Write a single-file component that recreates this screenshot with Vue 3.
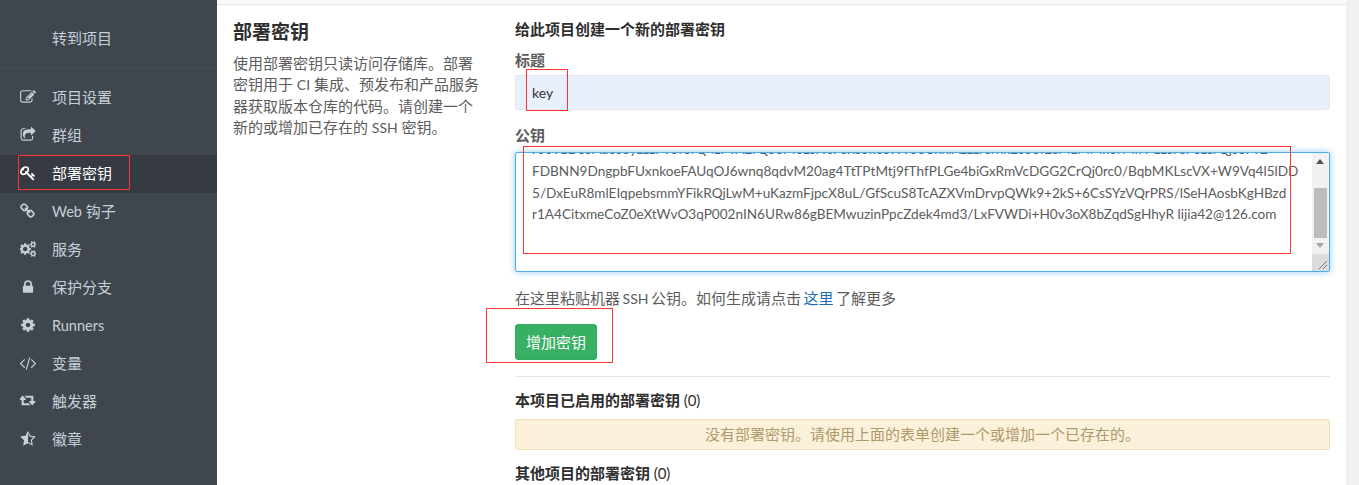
<script setup>
const P = {
  edit: 'M888 1184l116-116-152-152-116 116v56h96v96h56zm440-720q-16-16-33 1l-350 350q-17 17-1 33t33-1l350-350q17-17 1-33zm80 594v190q0 119-84.5 203.5t-203.5 84.5h-832q-119 0-203.5-84.5t-84.5-203.5v-832q0-119 84.5-203.5t203.5-84.5h832q63 0 117 25 15 7 18 23 3 17-9 29l-49 49q-14 14-32 8-23-6-45-6h-832q-66 0-113 47t-47 113v832q0 66 47 113t113 47h832q66 0 113-47t47-113v-126q0-13 9-22l64-64q15-15 35-7t20 29zm-96-738l288 288-672 672h-288v-288zm444 132l-92 92-288-288 92-92q28-28 68-28t68 28l152 152q28 28 28 68t-28 68z',
  share: 'M1472 989v259q0 119-84.5 203.5t-203.5 84.5h-832q-119 0-203.5-84.5t-84.5-203.5v-832q0-119 84.5-203.5t203.5-84.5h255q13 0 22.5 9.5t9.5 22.5q0 27-26 32-77 26-133 60-10 4-16 4h-112q-66 0-113 47t-47 113v832q0 66 47 113t113 47h832q66 0 113-47t47-113v-214q0-19 18-29 28-13 54-37 16-16 35-8 21 9 21 29zm237-496l-384 384q-18 19-45 19-12 0-25-5-39-17-39-59v-192h-160q-323 0-438 131-119 137-74 473 3 23-20 34-8 2-12 2-16 0-26-13-10-14-21-31t-39.5-68.5-49.5-99.5-38.5-114-17.5-122q0-49 3.5-91t14-90 28-88 47-81.5 68.5-74 94.5-61.5 124.5-48.5 159.5-30.5 196.5-11h160v-192q0-42 39-59 13-5 25-5 26 0 45 19l384 384q19 19 19 45t-19 45z',
  key: 'M832 512q0-80-56-136t-136-56-136 56-56 136q0 42 19 83-41-19-83-19-80 0-136 56t-56 136 56 136 136 56 136-56 56-136q0-42-19-83 41 19 83 19 80 0 136-56t56-136zm851 704q0 17-49 66t-66 49q-9 0-28.5-16t-36.5-33-38.5-40-24.5-26l-96 96 220 220q28 28 28 68 0 42-39 81t-81 39q-40 0-68-28l-671-671q-176 131-365 131-163 0-265.5-102.5t-102.5-265.5q0-160 95-313t248-248 313-95q163 0 265.5 102.5t102.5 265.5q0 189-131 365l355 355 96-96q-3-3-26-24.5t-40-38.5-33-36.5-16-28.5q0-17 49-66t66-49q13 0 23 10 6 6 46 44.5t82 79.5 86.5 86 73 78 28.5 41z',
  link: 'M1456 1216q0-40-28-68l-208-208q-28-28-68-28-42 0-72 32 3 3 19 18.5t21.5 21.5 15 19 13 25.5 3.5 27.5q0 40-28 68t-68 28q-15 0-27.5-3.5t-25.5-13-19-15-21.5-21.5-18.5-19q-33 31-33 73 0 40 28 68l206 207q27 27 68 27 40 0 68-26l147-146q28-28 28-67zm-703-705q0-40-28-68l-206-207q-28-28-68-28-39 0-68 27l-147 146q-28 28-28 67 0 40 28 68l208 208q27 27 68 27 42 0 72-31-3-3-19-18.5t-21.5-21.5-15-19-13-25.5-3.5-27.5q0-40 28-68t68-28q15 0 27.5 3.5t25.5 13 19 15 21.5 21.5 18.5 19q33-31 33-73zm895 705q0 120-85 203l-147 146q-83 83-203 83-121 0-204-85l-206-207q-83-83-83-203 0-123 88-209l-88-88q-86 88-208 88-120 0-204-84l-208-208q-84-84-84-204t85-203l147-146q83-83 203-83 121 0 204 85l206 207q83 83 83 203 0 123-88 209l88 88q86-88 208-88 120 0 204 84l208 208q84 84 84 204z',
  cogs: 'M832 896q0-106-75-181t-181-75-181 75-75 181 75 181 181 75 181-75 75-181zm768 512q0-52-38-90t-90-38-90 38-38 90q0 53 37.5 90.5t90.5 37.5 90.5-37.5 37.5-90.5zm0-1024q0-52-38-90t-90-38-90 38-38 90q0 53 37.5 90.5t90.5 37.5 90.5-37.5 37.5-90.5zm-384 421v185q0 10-7 19.5t-16 10.5l-155 24q-11 35-32 76 34 48 90 115 7 11 7 20 0 12-7 19-23 30-82.5 89.5t-78.5 59.5q-11 0-21-7l-115-90q-37 19-77 31-11 108-23 155-7 24-30 24h-186q-11 0-20-7.5t-10-17.5l-23-153q-34-10-75-31l-118 89q-7 7-20 7-11 0-21-8-144-133-144-160 0-9 7-19 10-14 41-53t47-61q-23-44-35-82l-152-24q-10-1-17-9.5t-7-19.5v-185q0-10 7-19.5t16-10.5l155-24q11-35 32-76-34-48-90-115-7-11-7-20 0-12 7-20 22-30 82-89t79-59q11 0 21 7l115 90q34-18 77-32 11-108 23-154 7-24 30-24h186q11 0 20 7.5t10 17.5l23 153q34 10 75 31l118-89q8-7 20-7 11 0 21 8 144 133 144 160 0 8-7 19-12 16-42 54t-45 60q23 48 34 82l152 23q10 2 17 10.5t7 19.5zm640 533v140q0 16-149 31-12 27-30 52 51 113 51 138 0 4-4 7-122 71-124 71-8 0-46-47t-52-68q-20 2-30 2t-30-2q-14 21-52 68t-46 47q-2 0-124-71-4-3-4-7 0-25 51-138-18-25-30-52-149-15-149-31v-140q0-16 149-31 13-29 30-52-51-113-51-138 0-4 4-7 4-2 35-20t59-34 30-16q8 0 46 46.5t52 67.5q20-2 30-2t30 2q51-71 92-112l6-2q4 0 124 70 4 3 4 7 0 25-51 138 17 23 30 52 149 15 149 31zm0-1024v140q0 16-149 31-12 27-30 52 51 113 51 138 0 4-4 7-122 71-124 71-8 0-46-47t-52-68q-20 2-30 2t-30-2q-14 21-52 68t-46 47q-2 0-124-71-4-3-4-7 0-25 51-138-18-25-30-52-149-15-149-31v-140q0-16 149-31 13-29 30-52-51-113-51-138 0-4 4-7 4-2 35-20t59-34 30-16q8 0 46 46.5t52 67.5q20-2 30-2t30 2q51-71 92-112l6-2q4 0 124 70 4 3 4 7 0 25-51 138 17 23 30 52 149 15 149 31z',
  lock: 'M640 768h512v-192q0-106-75-181t-181-75-181 75-75 181v192zm832 96v576q0 40-28 68t-68 28h-960q-40 0-68-28t-28-68v-576q0-40 28-68t68-28h32v-192q0-184 132-316t316-132 316 132 132 316v192h32q40 0 68 28t28 68z',
  cog: 'M1152 896q0-106-75-181t-181-75-181 75-75 181 75 181 181 75 181-75 75-181zm512-109v222q0 12-8 23t-20 13l-185 28q-19 54-39 91 35 50 107 138 10 12 10 25t-9 23q-27 37-99 108t-94 71q-12 0-26-9l-138-108q-44 23-91 38-16 136-29 186-7 28-36 28h-222q-14 0-24.5-8.5t-11.5-21.5l-28-184q-49-16-90-37l-141 107q-10 9-25 9-14 0-25-11-126-114-165-168-7-10-7-23 0-12 8-23 15-21 51-66.5t54-70.5q-27-50-41-99l-183-27q-13-2-21-12.5t-8-23.5v-222q0-12 8-23t19-13l186-28q14-46 39-92-40-57-107-138-10-12-10-24 0-10 9-23 26-36 98.5-107.5t94.5-71.5q13 0 26 10l138 107q44-23 91-38 16-136 29-186 7-28 36-28h222q14 0 24.5 8.5t11.5 21.5l28 184q49 16 90 37l142-107q9-9 24-9 13 0 25 10 129 119 165 170 7 8 7 22 0 12-8 23-15 21-51 66.5t-54 70.5q26 50 41 98l183 28q13 2 21 12.5t8 23.5z',
  code: 'M553 1399l-50 50q-10 10-23 10t-23-10l-466-466q-10-10-10-23t10-23l466-466q10-10 23-10t23 10l50 50q10 10 10 23t-10 23l-393 393 393 393q10 10 10 23t-10 23zm591-1067l-373 1291q-4 13-15.5 19.5t-23.5 2.5l-62-17q-13-4-19.5-15.5t-2.5-24.5l373-1291q4-13 15.5-19.5t23.5-2.5l62 17q13 4 19.5 15.5t2.5 24.5zm657 651l-466 466q-10 10-23 10t-23-10l-50-50q-10-10-10-23t10-23l393-393-393-393q-10-10-10-23t10-23l50-50q10-10 23-10t23 10l466 466q10 10 10 23t-10 23z',
  retweet: 'M1216 1376q0 13-9.5 22.5t-22.5 9.5h-960q-8 0-13.5-2t-9-7-5.5-8-3-11.5-1-11.5v-600h-192q-26 0-45-19t-19-45q0-24 15-41l320-384q19-22 49-22t49 22l320 384q15 17 15 41 0 26-19 45t-45 19h-192v384h576q16 0 25 11l160 192q7 10 7 21zm640-416q0 24-15 41l-320 384q-20 23-49 23t-49-23l-320-384q-15-17-15-41 0-26 19-45t45-19h192v-384h-576q-16 0-25-12l-160-192q-7-9-7-20 0-13 9.5-22.5t22.5-9.5h960q8 0 13.5 2t9 7 5.5 8 3 11.5 1 11.5v600h192q26 0 45 19t19 45z',
  star: 'M1250 957l257-250-356-52-66-10-30-60-159-322v963l59 31 318 168-60-355-12-66zm452-262l-363 354 86 500q5 33-6 51.5t-34 18.5q-17 0-40-12l-449-236-449 236q-23 12-40 12-23 0-34-18.5t-6-51.5l86-500-364-354q-32-32-23-59.5t54-34.5l502-73 225-455q20-41 49-41 28 0 49 41l225 455 502 73q45 7 54 34.5t-24 59.5z',
}
const items = [
  { icon: 'edit', text: '项目设置' },
  { icon: 'share', text: '群组' },
  { icon: 'key', text: '部署密钥', active: true },
  { icon: 'link', latin: 'Web', text: ' 钩子' },
  { icon: 'cogs', text: '服务' },
  { icon: 'lock', text: '保护分支' },
  { icon: 'cog', latin: 'Runners', text: '' },
  { icon: 'code', text: '变量' },
  { icon: 'retweet', text: '触发器' },
  { icon: 'star', text: '徽章' },
]
const keyLines = [
  'r00v1Dc3Aa0s8yzzzPv0f8rQ4zPvA2rQSoM0zsrvsFcRs3k0sWv3oCnxlAzzz/srhk2s03f2sr4zMMk3rMf/P1zsFsF3zsrQjsoFv2',
  'FDBNN9DngpbFUxnkoeFAUqOJ6wnq8qdvM20ag4TtTPtMtj9fThfPLGe4biGxRmVcDGG2CrQj0rc0/BqbMKLscVX+W9Vq4l5lDD',
  '5/DxEuR8mlEIqpebsmmYFikRQjLwM+uKazmFjpcX8uL/GfScuS8TcAZXVmDrvpQWk9+2kS+6CsSYzVQrPRS/lSeHAosbKgHBzd',
  'r1A4CitxmeCoZ0eXtWvO3qP002nIN6URw86gBEMwuzinPpcZdek4md3/LxFVWDi+H0v3oX8bZqdSgHhyR lijia42@126.com',
]
</script>

<template>
  <div class="page">
    <aside class="sidebar">
      <div class="back">转到项目</div>
      <nav class="nav">
        <div v-for="it in items" :key="it.icon" class="item" :class="{ active: it.active }">
          <svg class="ico" :viewBox="it.icon === 'retweet' ? '0 0 1920 1792' : '0 0 1792 1792'"><path :d="P[it.icon]" /></svg>
          <span><span v-if="it.latin" class="navlat">{{ it.latin }}</span>{{ it.text }}</span>
        </div>
      </nav>
    </aside>

    <main class="main">
      <div class="topstrip"></div>
      <div class="content">
        <section class="intro">
          <h4>部署密钥</h4>
          <p>使用部署密钥只读访问存储库。部署密钥用于 <span class="lat">CI</span> 集成、预发布和产品服务器获取版本仓库的代码。请创建一个新的或增加已存在的 <span class="lat">SSH</span> 密钥。</p>
        </section>
        <section class="form">
          <h5>给此项目创建一个新的部署密钥</h5>
          <label class="lab l1">标题</label>
          <div class="input lat">key</div>
          <label class="lab l2">公钥</label>
          <div class="textarea">
            <div class="lines">
              <div v-for="l in keyLines" :key="l">{{ l }}</div>
            </div>
            <div class="sb">
              <span class="up"></span>
              <span class="thumb"></span>
              <span class="down"></span>
            </div>
            <div class="grip">
              <svg width="17" height="17" viewBox="0 0 17 17"><path d="M15 7L7 15M15 11L11 15" stroke="#777" stroke-width="1" fill="none" /></svg>
            </div>
          </div>
          <p class="help">在这里粘贴机器 <span class="lat">SSH</span> 公钥。如何生成请点击 <a>这里</a> 了解更多</p>
          <button class="btn">增加密钥</button>
          <hr />
          <h5 class="sub">本项目已启用的部署密钥 <span class="cnt">(0)</span></h5>
          <div class="alert">没有部署密钥。请使用上面的表单创建一个或增加一个已存在的。</div>
          <h5 class="sub s2">其他项目的部署密钥 <span class="cnt">(0)</span></h5>
        </section>
      </div>
    </main>
    <div class="gutter"></div>

    <i class="mark m1"></i>
    <i class="mark m2"></i>
    <i class="mark m3"></i>
    <i class="mark m4"></i>
  </div>
</template>

<style>
html, body { margin: 0; overflow: hidden; background: #fff; }
</style>

<style scoped>
.page {
  position: relative;
  display: flex;
  width: 1359px;
  height: 485px;
  overflow: hidden;
  font-family: "Lato", "Noto Sans CJK SC", sans-serif;
  font-size: 15px;
  color: #5c5c5c;
}
.lat { font-size: 14px; }
.navlat { font-size: 14.5px; }
.sidebar { width: 217px; flex: none; background: #3f464d; color: #c6d0da; }
.back { height: 69px; box-sizing: border-box; padding: 0 0 0 52px; line-height: 76px; border-bottom: 1px solid #474d55; }
.nav { padding-top: 10px; }
.item { display: flex; align-items: center; height: 38px; padding-left: 20px; }
.item > span { margin-left: 16px; line-height: 36px; height: 37px; margin-bottom: 1px; }
.ico { width: 16px; height: 16px; fill: #c6d0da; flex: none; margin-bottom: 2px; }
.item.active { background: #363a42; color: #fff; }
.item.active .ico { fill: #fff; }
.main { flex: 1; min-width: 0; }
.topstrip { height: 4px; background: #fafafa; border-bottom: 1px solid #e5e5e5; }
.content { display: flex; padding: 15px 0 0 16px; }
.intro { width: 282px; flex: none; }
.intro h4 { margin: 0; font-size: 19px; line-height: 24px; font-weight: 700; color: #2e2e2e; }
.intro p { margin: 9px 0 0; line-height: 21.4px; width: 250px; }
.form { width: 815px; flex: none; }
h5 { margin: 0; font-size: 15px; line-height: 18px; font-weight: 700; color: #2e2e2e; }
.cnt { font-weight: 400; }
.lab { display: block; font-weight: 700; line-height: 18px; color: #5c5c5c; }
.l1 { margin-top: 13px; }
.l2 { margin-top: 16px; }
.input {
  margin-top: 6px; height: 35px; box-sizing: border-box; background: #e8f0fe;
  border: 1px solid #e5e5e5; border-radius: 3px; padding: 0 16px; line-height: 34px; color: #333;
}
.textarea {
  position: relative; margin-top: 8px; height: 120px; box-sizing: border-box; background: #fff;
  border: 1px solid #4fabf0; border-radius: 2px; box-shadow: 0 0 6px rgba(79, 171, 240, 0.65); overflow: hidden;
}
.lines { margin-top: -14px; padding-left: 16px; font-size: 13.6px; line-height: 21.8px; white-space: nowrap; }
.sb { position: absolute; top: 0; right: 0; width: 17px; height: 102px; background: #f1f1f1; }
.up, .down { position: absolute; left: 4px; width: 0; height: 0; border-left: 4px solid transparent; border-right: 4px solid transparent; }
.up { top: 6px; border-bottom: 5px solid #505050; }
.down { bottom: 7px; border-top: 5px solid #a3a3a3; }
.thumb { position: absolute; top: 35px; left: 2px; width: 13px; height: 50px; background: #bdbdbd; }
.grip { position: absolute; right: 0; bottom: 0; width: 17px; height: 17px; background: #dcdcdc; }
.grip svg { display: block; }
.help { margin: 16px 0 0; line-height: 20px; word-spacing: -1.3px; }
.help a { color: #1b6cb5; }
.btn {
  display: block; margin-top: 15px; width: 82px; height: 36px; padding: 0 0 2px; border: 1px solid #2faa60; border-radius: 3px;
  background: #38b064; color: #fff; font: inherit;
}
hr { margin: 16px 0 0; border: 0; border-top: 1px solid #e5e5e5; }
.sub { margin-top: 14px; }
.alert {
  margin-top: 10px; height: 31px; box-sizing: border-box; border: 1px solid #f0e0b4; border-radius: 3px; background: #fbf0da;
  color: #ad9a6c; text-align: center; line-height: 29px;
}
.s2 { margin-top: 14px; }
.gutter { position: absolute; top: 0; right: 0; width: 13px; height: 485px; background: #f0f0f0; }
.mark { position: absolute; box-sizing: border-box; border: 1px solid #f33; }
.m1 { left: 18px; top: 155px; width: 112px; height: 35px; }
.m2 { left: 526px; top: 69px; width: 42px; height: 42px; }
.m3 { left: 523px; top: 146px; width: 768px; height: 108px; }
.m4 { left: 486px; top: 308px; width: 127px; height: 55px; }
</style>
